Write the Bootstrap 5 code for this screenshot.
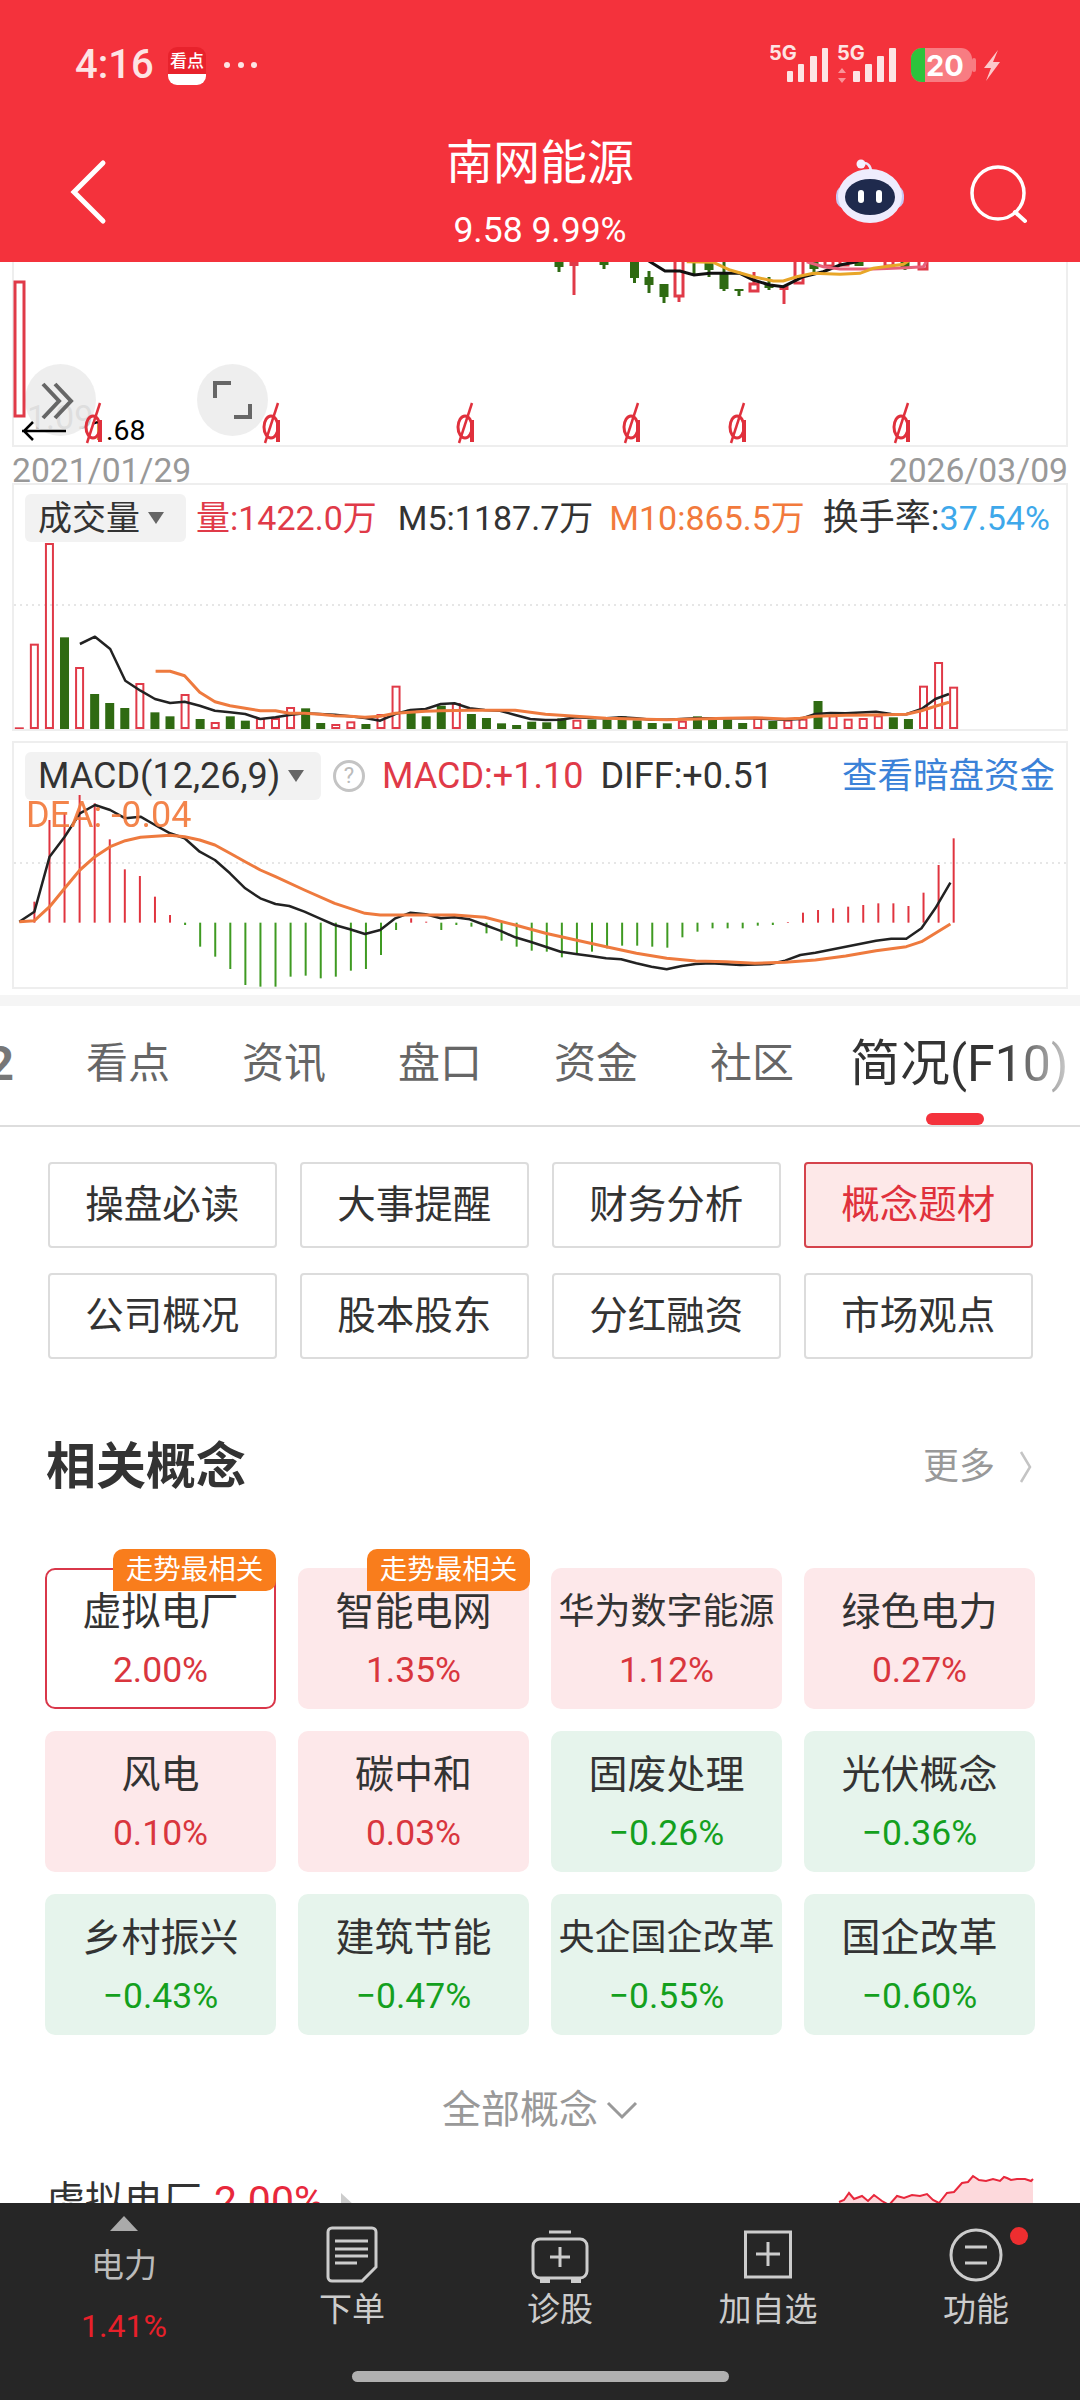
<!DOCTYPE html>
<html lang="zh-CN">
<head>
    <meta charset="UTF-8">
    <meta name="viewport" content="width=device-width, initial-scale=1.0">
    <title>南网能源</title>
    <link href="https://cdn.jsdelivr.net/npm/bootstrap@5.3.0/dist/css/bootstrap.min.css" rel="stylesheet">
    <style>
        html, body { margin: 0; background: #fff; }
        body { font-family: Roboto, "Noto Sans CJK SC", sans-serif; color: #333; }
        .phone { width: 1080px; height: 2400px; overflow: hidden; }

        .top-head { height: 262px; background: #f4323c; color: #fff; flex: none; }
        .status-row { height: 120px; }
        .clock { margin: 40px 0 0 75px; width: 93px; font-size: 40px; font-weight: 500; line-height: 50px; color: #fde4e4; }
        .app-ico { margin-top: 47px; width: 38px; height: 38px; border-radius: 9px; background: linear-gradient(#e8222c 72%, #fff 72%); font-size: 17px; line-height: 28px; text-align: center; color: #fff; font-weight: 500; white-space: nowrap; }
        .more-dots { margin: 60px 0 0 17px; }
        .status-right { margin-left: auto; }
        .title-row { height: 142px; }
        .side-box { width: 300px; flex: none; }
        .stock-name { font-size: 47px; line-height: 60px; margin-top: 13px; }
        .stock-price { font-size: 35.5px; line-height: 40px; margin-top: 17px; color: #fff; }

        .chart-frame { margin: 0 12px; border: 2px solid #eee; }
        .chart-frame > svg { display: block; width: 1052px; overflow: visible; }
        .frame-k { border-top: 0; height: 185px; position: relative; }
        .frame-k > svg { position: relative; z-index: 1; }
        .float-btn { position: absolute; width: 71px; height: 72px; border-radius: 50%; background: rgba(232,232,232,.72); top: 102px; }
        .float-btn svg { display: block; }
        .old-price { position: absolute; left: 13px; top: 137px; font-size: 34px; color: #c4c4c4; line-height: 36px; }
        .low-price { position: absolute; left: 6px; top: 154px; font-size: 28.500px; line-height: 30px; color: #000; }
        .low-price b { font-weight: 400; margin-left: 22px; }
        .date-row { margin: 0 12px; height: 36px; font-size: 33.700px; line-height: 48px; color: #999; }
        .frame-vol { height: 248px; padding-top: 9px; }
        .frame-macd { margin-top: 10px; height: 248px; padding-top: 9px; position: relative; }
        .ind-head { height: 48px; padding-left: 11px; font-size: 34px; line-height: 48px; white-space: nowrap; }
        .ind-big { font-size: 36px; }
        .ind-pick { background: #f2f2f2; border-radius: 6px; height: 48px; padding-left: 13px; display: flex; align-items: center; flex: none; }
        .down-tri { width: 0; height: 0; border-left: 8px solid transparent; border-right: 8px solid transparent; border-top: 12px solid #666; margin-left: 8px; }
        .c-red { color: #e03a48; }
        .c-dark { color: #333; }
        .c-orange { color: #f27a3c; }
        .c-blue { color: #3ea8ea; font-size: 34px; }
        .c-link { color: #3b82d8; font-size: 35.5px; }
        .help-ring { width: 32px; height: 32px; border: 3px solid #c4c4c4; border-radius: 50%; color: #bbb; font-size: 22px; line-height: 26px; text-align: center; flex: none; }
        .dea-label { position: absolute; left: 12px; top: 54px; font-size: 36px; line-height: 36px; color: #f27a3c; opacity: .92; }

        .gray-band { height: 11px; background: #f5f5f5; margin-top: 6px; flex: none; }
        .tab-strip { height: 121px; border-bottom: 2px solid #ddd; position: relative; overflow: hidden; flex: none; white-space: nowrap; }
        .tab-item { font-size: 42px; line-height: 116px; color: #666; width: 156px; text-align: center; flex: none; }
        .tab-cut { font-size: 48px; font-weight: 700; color: #777; width: 14px; flex: none; direction: rtl; overflow: hidden; line-height: 116px; }
        .tab-on { font-size: 50px; line-height: 116px; color: #333; margin-left: 20px; background: linear-gradient(90deg, #333 70%, #ccc 100%); -webkit-background-clip: text; background-clip: text; -webkit-text-fill-color: transparent; }
        .tab-mark { position: absolute; left: 926px; bottom: 0; width: 58px; height: 12px; border-radius: 6px; background: #f4323c; }

        .btn-grid { display: grid; grid-template-columns: repeat(4, 228.500px); column-gap: 23.500px; row-gap: 25px; padding: 35px 0 0 48px; }
        .f10-btn { height: 86px; border: 2px solid #dcdcdc; border-radius: 4px; background: #fff; color: #333; font-size: 38.500px; padding: 0; }
        .f10-btn.picked { border-color: #d5434c; background: #fde8e8; color: #e0313c; }

        .sec-head { height: 60px; margin-top: 78px; padding: 0 47px 0 46px; }
        .sec-title { font-size: 50px; font-weight: 700; color: #333; line-height: 60px; margin: 0; }
        .sec-more { font-size: 36px; color: #999; }

        .idea-grid { display: grid; grid-template-columns: repeat(4, 231px); column-gap: 22px; row-gap: 22px; padding: 71px 0 0 45px; }
        .idea-card { height: 141px; border-radius: 10px; position: relative; text-align: center; padding-top: 19px; }
        .idea-card.up { background: #fde8ea; }
        .idea-card.down { background: #e6f4ec; }
        .idea-card.picked { background: #fff; border: 2px solid #d9374a; padding-top: 17px; }
        .idea-name { font-size: 39px; line-height: 50px; color: #333; white-space: nowrap; }
        .idea-name.tight { font-size: 36px; }
        .idea-pct { font-size: 35.500px; line-height: 40px; margin-top: 13px; }
        .up .idea-pct, .picked .idea-pct { color: #d9363e; }
        .down .idea-pct { color: #14a01e; }
        .trend-tag { position: absolute; right: -1px; top: -19px; width: 163px; height: 42px; background: #f97d1c; color: #fff; font-size: 27.500px; line-height: 42px; text-align: center; border-radius: 10px 10px 10px 0; white-space: nowrap; }
        .picked .trend-tag { right: -2px; top: -21px; }

        .all-link { height: 50px; margin-top: 50px; font-size: 39px; line-height: 50px; color: #999; }
        .peek-row { margin-top: 36px; padding: 0 46px; height: 60px; }
        .peek-name { font-size: 39px; line-height: 60px; color: #333; }
        .peek-pct { font-size: 41px; line-height: 60px; color: #e8283c; margin-left: 12px; }

        .bottom-bar { height: 197px; background: #262626; flex: none; color: #ccc; }
        .bar-items { height: 168px; }
        .sector-cell { width: 248px; flex: none; text-align: center; padding-top: 13px; }
        .up-tri { width: 0; height: 0; border-left: 14px solid transparent; border-right: 14px solid transparent; border-bottom: 15px solid #aaa; margin: 0 auto; }
        .sector-name { font-size: 33px; line-height: 40px; margin-top: 15px; color: #bbb; }
        .sector-pct { font-size: 32px; line-height: 40px; margin-top: 20px; color: #e8202a; }
        .bar-cell { flex: 1 1 0; text-align: center; padding-top: 23px; position: relative; }
        .bar-cell svg { display: block; margin: 0 auto; }
        .bar-label { font-size: 33px; line-height: 40px; margin-top: 4px; white-space: nowrap; }
        .new-dot { position: absolute; left: 138px; top: 24px; width: 18px; height: 18px; border-radius: 50%; background: #ee2e30; }
        .home-line { width: 377px; height: 11px; border-radius: 6px; background: #b0b0b0; margin: 0 auto; }
    </style>
</head>
<body>
<div class="phone d-flex flex-column">
    <header class="top-head">
        <div class="status-row d-flex">
            <div class="clock">4:16</div>
            <div class="app-ico">看点</div>
            <svg class="more-dots" width="36" height="10" viewBox="0 0 36 10"><g fill="#fde4e4"><circle cx="4" cy="5" r="3"/><circle cx="18" cy="5" r="3"/><circle cx="31" cy="5" r="3"/></g></svg>
            <svg class="status-right" width="310" height="120" viewBox="770 0 310 120">
                <g fill="#fde4e4">
                    <text x="769" y="60" font-family="Inter, sans-serif" font-size="20" font-weight="700">5G</text>
                    <rect x="787" y="71" width="6" height="11" rx="1"/><rect x="798" y="64" width="6" height="18" rx="1"/><rect x="810" y="56" width="7" height="26" rx="1"/><rect x="822" y="48" width="6" height="34" rx="1"/>
                    <text x="837" y="60" font-family="Inter, sans-serif" font-size="20" font-weight="700">5G</text>
                    <path d="M842 68l4 5h-8zM842 83l4-5h-8z" opacity=".55"/>
                    <rect x="853" y="71" width="7" height="11" rx="1"/><rect x="865" y="64" width="7" height="18" rx="1"/><rect x="877" y="56" width="7" height="26" rx="1"/><rect x="889" y="48" width="7" height="34" rx="1"/>
                </g>
                <rect x="911" y="48" width="61" height="34" rx="11" fill="#fff" opacity=".36"/>
                <rect x="972" y="58" width="4" height="14" rx="2" fill="#fff" opacity=".36"/>
                <path d="M922 48h3v34h-3a11 11 0 0 1-11-11V59a11 11 0 0 1 11-11z" fill="#2dc33c"/>
                <text x="926" y="76" font-family="Inter, sans-serif" font-size="29" font-weight="700" fill="#fff">20</text>
                <path d="M998 50l-14 18h7l-5 13 14-19h-7z" fill="#fde4e4" opacity=".85"/>
            </svg>
        </div>
        <div class="title-row d-flex">
            <div class="side-box">
                <svg width="120" height="142" viewBox="0 120 120 142"><path d="M103 163L74 192l29 29" fill="none" stroke="#fff" stroke-width="5" stroke-linecap="round"/></svg>
            </div>
            <div class="flex-grow-1 text-center">
                <div class="stock-name">南网能源</div>
                <div class="stock-price">9.58 9.99%</div>
            </div>
            <div class="side-box">
                <svg width="300" height="142" viewBox="780 120 300 142">
                    <path d="M861 164c6-3 10 2 10 8" fill="none" stroke="#e9e7fb" stroke-width="2.5"/>
                    <circle cx="861" cy="164" r="4.5" fill="#f4f1ff"/>
                    <rect x="836" y="185" width="68" height="24" rx="10" fill="#c9c6f2"/>
                    <ellipse cx="870" cy="196" rx="32" ry="27" fill="#eeecfd"/>
                    <ellipse cx="870" cy="197" rx="25" ry="18" fill="#1f2a4d"/>
                    <rect x="858" y="190" width="6" height="13" rx="3" fill="#fff"/>
                    <rect x="876" y="190" width="6" height="13" rx="3" fill="#fff"/>
                    <circle cx="998" cy="193" r="26" fill="none" stroke="#fff" stroke-width="3.5"/>
                    <path d="M1015 212l10 9" stroke="#fff" stroke-width="4" stroke-linecap="round"/>
                </svg>
            </div>
        </div>
    </header>

    <main class="flex-grow-1 overflow-hidden">
        <section class="chart-frame frame-k">
            <div class="old-price">1.09</div>
            <div class="float-btn" style="left:11px">
                <svg width="71" height="72" viewBox="25 364 71 72"><path d="M43 384l16 17-16 17M55 384l16 17-16 17" fill="none" stroke="#666" stroke-width="4"/></svg>
            </div>
            <div class="float-btn" style="left:183px">
                <svg width="71" height="72" viewBox="197 364 71 72"><path d="M215 398v-15h16M250 404v13h-16" fill="none" stroke="#666" stroke-width="4"/></svg>
            </div>
            <div class="low-price d-flex align-items-center">
                <svg width="48" height="30" viewBox="0 0 48 30"><path d="M2 15h44M13 6l-9 9 9 9" fill="none" stroke="#000" stroke-width="2.5"/></svg>
                <b>1.68</b>
            </div>
            <svg id="kChart" height="183" viewBox="14 262 1052 183"></svg>
        </section>
        <div class="date-row d-flex justify-content-between"><span>2021/01/29</span><span>2026/03/09</span></div>

        <section class="chart-frame frame-vol">
            <div class="ind-head d-flex">
                <div class="ind-pick" style="width:161px">成交量<i class="down-tri"></i></div>
                <span class="c-red" style="margin-left:10px">量:1422.0万</span>
                <span class="c-dark" style="margin-left:21px">M5:1187.7万</span>
                <span class="c-orange" style="margin-left:16px">M10:865.5万</span>
                <span class="c-dark ind-big" style="margin-left:18px">换手率:<span class="c-blue">37.54%</span></span>
            </div>
            <svg id="volChart" height="186" viewBox="14 543 1052 186"></svg>
        </section>

        <section class="chart-frame frame-macd">
            <div class="ind-head ind-big d-flex align-items-center">
                <div class="ind-pick" style="width:296px">MACD(12,26,9)<i class="down-tri"></i></div>
                <div class="help-ring" style="margin-left:12px">?</div>
                <span class="c-red" style="margin-left:17px">MACD:+1.10</span>
                <span class="c-dark" style="margin-left:17px">DIFF:+0.51</span>
                <span class="c-link ms-auto" style="margin-right:11px">查看暗盘资金</span>
            </div>
            <svg id="macdChart" height="187" viewBox="14 800 1052 187"></svg>
            <div class="dea-label">DEA: -0.04</div>
        </section>

        <div class="gray-band"></div>
        <nav class="tab-strip d-flex">
            <span class="tab-cut">2</span>
            <span class="tab-item" style="margin-left:36px">看点</span>
            <span class="tab-item">资讯</span>
            <span class="tab-item">盘口</span>
            <span class="tab-item">资金</span>
            <span class="tab-item">社区</span>
            <span class="tab-on">简况(F10)</span>
            <i class="tab-mark"></i>
        </nav>

        <div class="btn-grid">
            <button class="btn f10-btn">操盘必读</button>
            <button class="btn f10-btn">大事提醒</button>
            <button class="btn f10-btn">财务分析</button>
            <button class="btn f10-btn picked">概念题材</button>
            <button class="btn f10-btn">公司概况</button>
            <button class="btn f10-btn">股本股东</button>
            <button class="btn f10-btn">分红融资</button>
            <button class="btn f10-btn">市场观点</button>
        </div>

        <div class="sec-head d-flex align-items-center justify-content-between">
            <h2 class="sec-title">相关概念</h2>
            <div class="sec-more d-flex align-items-center gap-4">更多
                <svg width="14" height="34" viewBox="0 0 14 34"><path d="M2 2l9 15-9 15" fill="none" stroke="#c4c4c4" stroke-width="2.5"/></svg>
            </div>
        </div>

        <div class="idea-grid" id="ideaGrid"></div>

        <div class="all-link d-flex justify-content-center align-items-center gap-2">全部概念
            <svg width="32" height="20" viewBox="0 0 32 20"><path d="M2 3l14 14L30 3" fill="none" stroke="#999" stroke-width="3"/></svg>
        </div>

        <div class="peek-row d-flex align-items-start">
            <span class="peek-name">虚拟电厂</span>
            <span class="peek-pct">2.00%</span>
            <svg class="ms-3" style="margin-top:22px" width="16" height="26" viewBox="0 0 16 26"><path d="M1 0l14 13L1 26z" fill="#ccc"/></svg>
            <svg class="ms-auto" width="200" height="60" viewBox="835 2172 200 60">
                <path d="M840 2203l5-2 5-7 5 6 8-3 6 5 6-6 8 6 7 4 8-9 7 2 8-3 8 1 7-2 6 6 6 3 8-10 7-1 8-9 6-1 5-6 6 4 7 1 7-2 7 2 4-4 3 1 4 2 6-1 8 0 6 2 2-2v40H840z" fill="#fdd9dc"/>
                <path d="M840 2203l5-2 5-7 5 6 8-3 6 5 6-6 8 6 7 4 8-9 7 2 8-3 8 1 7-2 6 6 6 3 8-10 7-1 8-9 6-1 5-6 6 4 7 1 7-2 7 2 4-4 3 1 4 2 6-1 8 0 6 2 2-2" fill="none" stroke="#e8283c" stroke-width="2"/>
            </svg>
        </div>
    </main>

    <footer class="bottom-bar">
        <div class="bar-items d-flex">
            <div class="sector-cell">
                <div class="up-tri"></div>
                <div class="sector-name">电力</div>
                <div class="sector-pct">1.41%</div>
            </div>
            <div class="bar-cell">
                <svg width="70" height="60" viewBox="0 0 70 60" fill="none" stroke="#ccc" stroke-width="3"><path d="M17 2h40a4 4 0 0 1 4 4v35L47 55H17a4 4 0 0 1-4-4V6a4 4 0 0 1 4-4z" transform="translate(-2 0)"/><path d="M18 15h33M18 23h33M18 30h33M18 37h22"/></svg>
                <div class="bar-label">下单</div>
            </div>
            <div class="bar-cell">
                <svg width="70" height="60" viewBox="0 0 70 60" fill="none" stroke="#ccc" stroke-width="3"><path d="M24 6h22"/><path d="M15 13h40a7 7 0 0 1 7 7v25a7 7 0 0 1-7 7H15a7 7 0 0 1-7-7V20a7 7 0 0 1 7-7z"/><path d="M25 31h20M35 21v20"/><path d="M15 55h10M46 55h10" stroke-width="4"/></svg>
                <div class="bar-label">诊股</div>
            </div>
            <div class="bar-cell">
                <svg width="70" height="60" viewBox="0 0 70 60" fill="none" stroke="#ccc" stroke-width="3"><rect x="12.500" y="6" width="45" height="45"/><path d="M23 28h24M35 16v24"/></svg>
                <div class="bar-label">加自选</div>
            </div>
            <div class="bar-cell">
                <svg width="70" height="60" viewBox="0 0 70 60" fill="none" stroke="#ccc" stroke-width="3"><circle cx="35" cy="29" r="25"/><path d="M24 21h22M24 37h22"/></svg>
                <div class="bar-label">功能</div>
                <i class="new-dot"></i>
            </div>
        </div>
        <div class="home-line"></div>
    </footer>
</div>

<script src="https://cdn.jsdelivr.net/npm/bootstrap@5.3.0/dist/js/bootstrap.bundle.min.js"></script>
<script>
    const RED = '#e03a48', GREEN = '#2f6a12', LINE_ORANGE = '#ee7a3e';
    // numbers below were read off the screenshot, zx is horizontal zoom px
    const zx = v => v / 1.452;
    const volY = v => 480 + v / 3;

    function poly(pts, color, w, mapY) {
        const d = pts.map(p => zx(p[0]).toFixed(1) + ',' + mapY(p[1]).toFixed(1)).join(' ');
        return `<polyline points="${d}" fill="none" stroke="${color}" stroke-width="${w}" stroke-linejoin="round"/>`;
    }

    // volume
    const volBars = [[745,'r'],[497,'R'],[195,'R'],[475,'G'],[567,'R'],[645,'G'],[672,'G'],[687,'G'],[615,'R'],[700,'G'],[712,'G'],[648,'R'],[720,'G'],[732,'R'],[712,'G'],[725,'G'],[720,'R'],[720,'R'],[687,'R'],[688,'G'],[732,'G'],[738,'R'],[730,'R'],[735,'G'],[708,'R'],[623,'R'],[692,'G'],[712,'G'],[680,'G'],[675,'R'],[705,'G'],[717,'G'],[733,'G'],[738,'G'],[728,'G'],[730,'G'],[718,'G'],[725,'R'],[722,'G'],[722,'G'],[712,'G'],[724,'G'],[732,'G'],[733,'G'],[728,'R'],[712,'G'],[716,'G'],[722,'G'],[732,'G'],[720,'R'],[726,'G'],[725,'R'],[722,'R'],[666,'G'],[712,'R'],[722,'R'],[720,'R'],[712,'R'],[715,'G'],[720,'G'],[623,'R'],[552,'R'],[626,'R']];
    let vol = `<line x1="14" x2="1066" y1="606" y2="606" stroke="#e6e6e6" stroke-width="2" stroke-dasharray="2 4"/>`;
    volBars.forEach((b, i) => {
        const x = 19.3 + 15.07 * i, top = volY(b[0]), base = 730;
        if (b[1] === 'G' || b[1] === 'r') {
            vol += `<rect x="${x - 4.5}" y="${top}" width="9" height="${base - top}" fill="${b[1] === 'G' ? GREEN : RED}"/>`;
        } else {
            vol += `<rect x="${x - 3.5}" y="${top}" width="7" height="${base - top - 1}" fill="none" stroke="${RED}" stroke-width="2"/>`;
        }
    });
    const ma5 = [[116,495],[138,473],[160,510],[182,605],[204,635],[225,660],[247,672],[268,668],[290,680],[312,695],[334,700],[356,705],[378,720],[400,715],[420,708],[442,703],[464,705],[486,707],[508,712],[530,717],[552,725],[574,705],[596,693],[618,690],[640,675],[660,673],[682,688],[704,693],[726,695],[748,708],[770,720],[792,723],[814,722],[836,715],[858,717],[880,718],[902,715],[924,718],[946,722],[968,722],[1010,718],[1054,718],[1096,718],[1140,722],[1162,720],[1184,705],[1206,702],[1228,703],[1272,698],[1294,705],[1316,706],[1338,690],[1358,660],[1378,645]];
    const ma10 = [[226,577],[247,577],[268,590],[290,640],[312,668],[334,680],[356,688],[378,695],[400,695],[420,703],[442,703],[464,706],[486,710],[508,712],[530,715],[552,712],[574,703],[596,700],[618,697],[640,695],[682,694],[726,694],[748,694],[770,700],[792,706],[836,712],[880,718],[924,720],[968,722],[1054,718],[1096,716],[1140,720],[1162,718],[1184,712],[1228,709],[1272,708],[1316,706],[1338,695],[1358,682],[1378,670]];
    vol += poly(ma5, '#222', 2.5, volY) + poly(ma10, LINE_ORANGE, 3, volY);
    document.getElementById('volChart').innerHTML = vol;

    // macd
    const macdTops = [1265,1020,1000,945,970,1078,1168,1188,1250,1305,1335,1400,1430,1467,1515,1520,1520,1490,1487,1495,1490,1472,1467,1425,1350,1315,1325,1350,1335,1340,1360,1382,1400,1412,1415,1432,1420,1415,1405,1397,1397,1400,1403,1372,1355,1345,1345,1345,1337,1335,1326,1298,1290,1285,1280,1275,1270,1270,1278,1238,1155,1075];
    let macd = `<line x1="14" x2="1066" y1="863" y2="863" stroke="#e6e6e6" stroke-width="2" stroke-dasharray="2 4"/>`;
    const zero = volY(1328);
    macdTops.forEach((t, i) => {
        const x = 34.4 + 15.07 * i, y = volY(t);
        const color = t < 1328 ? '#e0343f' : '#3f9a22';
        macd += `<line x1="${x}" x2="${x}" y1="${zero}" y2="${y}" stroke="${color}" stroke-width="2"/>`;
    });
    const diff = [[28,1325],[50,1295],[72,1130],[94,1070],[116,1000],[138,975],[160,990],[182,1015],[204,1010],[225,1035],[247,1060],[268,1075],[290,1115],[312,1140],[334,1180],[356,1225],[378,1255],[400,1272],[420,1278],[442,1295],[464,1315],[486,1335],[508,1348],[530,1362],[552,1350],[574,1315],[596,1298],[618,1303],[640,1315],[660,1312],[682,1318],[704,1335],[726,1352],[748,1372],[770,1385],[792,1400],[814,1415],[836,1422],[858,1428],[880,1435],[902,1438],[924,1450],[946,1460],[968,1468],[990,1458],[1010,1452],[1032,1450],[1075,1455],[1118,1452],[1140,1442],[1162,1425],[1184,1418],[1228,1400],[1272,1382],[1294,1376],[1316,1376],[1338,1345],[1358,1285],[1380,1208]];
    const dea = [[28,1325],[50,1322],[72,1280],[94,1225],[116,1170],[138,1130],[160,1100],[182,1082],[204,1072],[247,1066],[268,1070],[290,1080],[312,1095],[334,1120],[356,1145],[378,1170],[400,1190],[442,1230],[486,1270],[530,1300],[552,1305],[596,1305],[660,1305],[704,1312],[748,1335],[792,1360],[836,1380],[880,1400],[924,1420],[968,1435],[1010,1443],[1054,1445],[1096,1450],[1140,1447],[1184,1440],[1228,1428],[1272,1412],[1316,1400],[1338,1385],[1358,1360],[1380,1332]];
    macd += poly(diff, '#222', 2.5, volY) + poly(dea, LINE_ORANGE, 3, volY);
    document.getElementById('macdChart').innerHTML = macd;

    // candles under the header: x, body top, body bottom, wick top, wick bottom
    const candles = [[559,255,267,255,272,'G'],[574,255,266,255,295,'R'],[604,255,265,255,269,'G'],[634.500,255,278,255,283,'G'],[649,277,285,271,293,'G'],[664,284,297,284,303,'G'],[679,255,296,255,302,'H'],[694,255,262,255,275,'G'],[709,255,270,255,277,'G'],[724,272,289,262,291,'G'],[739,289,291,289,296,'G'],[754,284,291,272,291,'H'],[769,284,288,277,290,'G'],[784,286,290,286,304,'R'],[799,255,283,255,283,'H'],[814,255,269,255,272,'G'],[829,255,266,255,266,'H'],[844,255,265,255,265,'H'],[859,255,266,255,266,'G'],[889,255,266,255,266,'H'],[905,255,268,255,270,'G'],[923,255,269,255,269,'H']];
    let k = `<rect x="15" y="282" width="9" height="134" fill="none" stroke="${RED}" stroke-width="3"/>`;
    candles.forEach(c => {
        const color = c[5] === 'G' ? GREEN : RED;
        k += `<line x1="${c[0]}" x2="${c[0]}" y1="${c[3]}" y2="${c[4]}" stroke="${color}" stroke-width="3"/>`;
        if (c[5] === 'H') {
            k += `<rect x="${c[0] - 4}" y="${c[1]}" width="8" height="${c[2] - c[1]}" fill="#fff" stroke="${color}" stroke-width="3"/>`;
        } else {
            k += `<rect x="${c[0] - 4.5}" y="${c[1]}" width="9" height="${c[2] - c[1]}" fill="${color}"/>`;
        }
    });
    const kLine = (pts, color) => `<polyline points="${pts.map(p => (540 + p[0] / 3).toFixed(1) + ',' + (255 + p[1] / 3).toFixed(1)).join(' ')}" fill="none" stroke="${color}" stroke-width="3"/>`;
    k += kLine([[300,0],[330,20],[375,48],[420,48],[462,60],[510,55],[570,55],[600,55],[640,75],[690,90],[730,95],[790,65],[850,50],[900,30],[950,20],[990,0]], '#111');
    k += kLine([[800,20],[850,35],[900,42],[1000,42],[1100,38],[1150,35],[1165,10]], '#e8607a');
    k += kLine([[440,20],[520,22],[570,45],[640,65],[700,78],[730,78],[770,65],[820,55],[900,58],[960,55],[1000,40],[1090,28],[1110,15]], '#e8a628');
    // the little red markers along the bottom
    [96, 274, 468, 634, 740, 904].forEach(x => {
        k += `<g fill="none" stroke="#e0303c"><ellipse cx="${x - 3}" cy="427" rx="7" ry="11" stroke-width="3"/><line x1="${x + 4}" x2="${x + 4}" y1="420" y2="442" stroke-width="4"/><line x1="${x + 4}" x2="${x - 9}" y1="403" y2="443" stroke-width="2.5"/></g>`;
    });
    document.getElementById('kChart').innerHTML = k;

    // concept cards
    const ideas = [
        ['虚拟电厂','2.00%','picked',1],['智能电网','1.35%','up',1],['华为数字能源','1.12%','up'],['绿色电力','0.27%','up'],
        ['风电','0.10%','up'],['碳中和','0.03%','up'],['固废处理','−0.26%','down'],['光伏概念','−0.36%','down'],
        ['乡村振兴','−0.43%','down'],['建筑节能','−0.47%','down'],['央企国企改革','−0.55%','down'],['国企改革','−0.60%','down']
    ];
    document.getElementById('ideaGrid').innerHTML = ideas.map(i => `
        <div class="idea-card ${i[2]}">
            ${i[3] ? '<span class="trend-tag">走势最相关</span>' : ''}
            <div class="idea-name ${i[0].length > 4 ? 'tight' : ''}">${i[0]}</div>
            <div class="idea-pct">${i[1]}</div>
        </div>`).join('');
</script>
</body>
</html>
